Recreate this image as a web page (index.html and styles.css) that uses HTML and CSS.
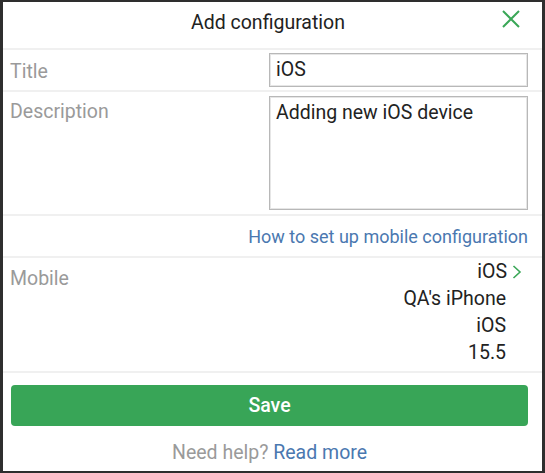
FILE: index.html
```html
<!DOCTYPE html>
<html>
<head>
<meta charset="utf-8">
<link rel="stylesheet" href="styles.css">
</head>
<body>
<div class="frame">
  <div class="header">
    <div class="title">Add configuration</div>
    <svg class="close" width="20" height="20" viewBox="0 0 20 20"><path d="M2 2L18 18M18 2L2 18" stroke="#3aa757" stroke-width="2" fill="none"/></svg>
  </div>
  <div class="row row-title">
    <div class="label">Title</div>
    <div class="input">iOS</div>
  </div>
  <div class="row row-desc">
    <div class="label">Description</div>
    <div class="input textarea">Adding new iOS device</div>
  </div>
  <div class="row row-link">
    <a class="link">How to set up mobile configuration</a>
  </div>
  <div class="row row-mobile">
    <div class="label">Mobile</div>
    <div class="values">
      <div class="val first">iOS<svg class="chev" width="10" height="16" viewBox="0 0 10 16"><path d="M1.5 2L8 8L1.5 14" stroke="#3aa757" stroke-width="1.6" fill="none"/></svg></div>
      <div class="val">QA's iPhone</div>
      <div class="val">iOS</div>
      <div class="val">15.5</div>
    </div>
  </div>
  <div class="footer">
    <button class="save">Save</button>
    <div class="help"><span class="muted">Need help?</span> <a class="link">Read more</a></div>
  </div>
</div>
</body>
</html>
```
FILE: styles.css
```css
* { box-sizing: border-box; }
html, body { margin: 0; padding: 0; }
body { width: 545px; height: 473px; background: #2e2e2e; font-family: Roboto, "Liberation Sans", sans-serif; }
.frame {
  position: absolute; left: 3px; top: 2px; width: 539px; height: 469px;
  background: #fff; color: #222;
}
.header {
  height: 48px; display: flex; align-items: center; justify-content: center;
  position: relative; border-bottom: 2px solid #f0f0f0; padding-right: 9px;
}
.title { font-size: 19.5px; color: #222; margin-top: -6px; }
.close { position: absolute; right: 21px; top: 7px; }
.row { display: flex; justify-content: space-between; border-bottom: 2px solid #f0f0f0; padding: 0 14px 0 7px; }
.label { font-size: 19.5px; color: #9a9a9a; }
.input {
  width: 259px; border: 1px solid #b8b8b8; box-shadow: inset 0 0 0 1px #e6e6e6;
  font-size: 19.5px; color: #222; padding: 0 6px;
}
.row-title { height: 42px; align-items: center; }
.row-title .label { margin-top: 2px; }
.row-title .input { height: 34px; line-height: 32px; margin-top: 0; }
.row-desc { height: 124px; padding-top: 4px; }
.row-desc .label { margin-top: 4px; }
.textarea { height: 114px; line-height: 28px; padding-top: 2px; }
.row-link { height: 42px; justify-content: flex-end; align-items: center; }
.link { color: #4a78b0; font-size: 18px; text-decoration: none; }
.row-mobile { height: 115px; padding-top: 0; padding-right: 36px; }
.row-mobile .label { margin-top: 9px; }
.values { display: flex; flex-direction: column; align-items: flex-end; margin-top: 0; }
.val { font-size: 19.5px; line-height: 27px; height: 27px; color: #222; }
.val.first { margin-right: -16px; display: flex; align-items: center; }
.chev { margin-left: 5px; }
.footer { padding: 12px 14px 0 8px; }
.save {
  display: block; width: 100%; height: 41px; border: none; border-radius: 4px;
  background: #38a557; color: #fff; font-family: inherit; font-size: 19.5px; font-weight: 500;
}
.help { text-align: center; margin-top: 15px; font-size: 19.5px; }
.help .link { font-size: 19.5px; }
.muted { color: #9a9a9a; }
```
